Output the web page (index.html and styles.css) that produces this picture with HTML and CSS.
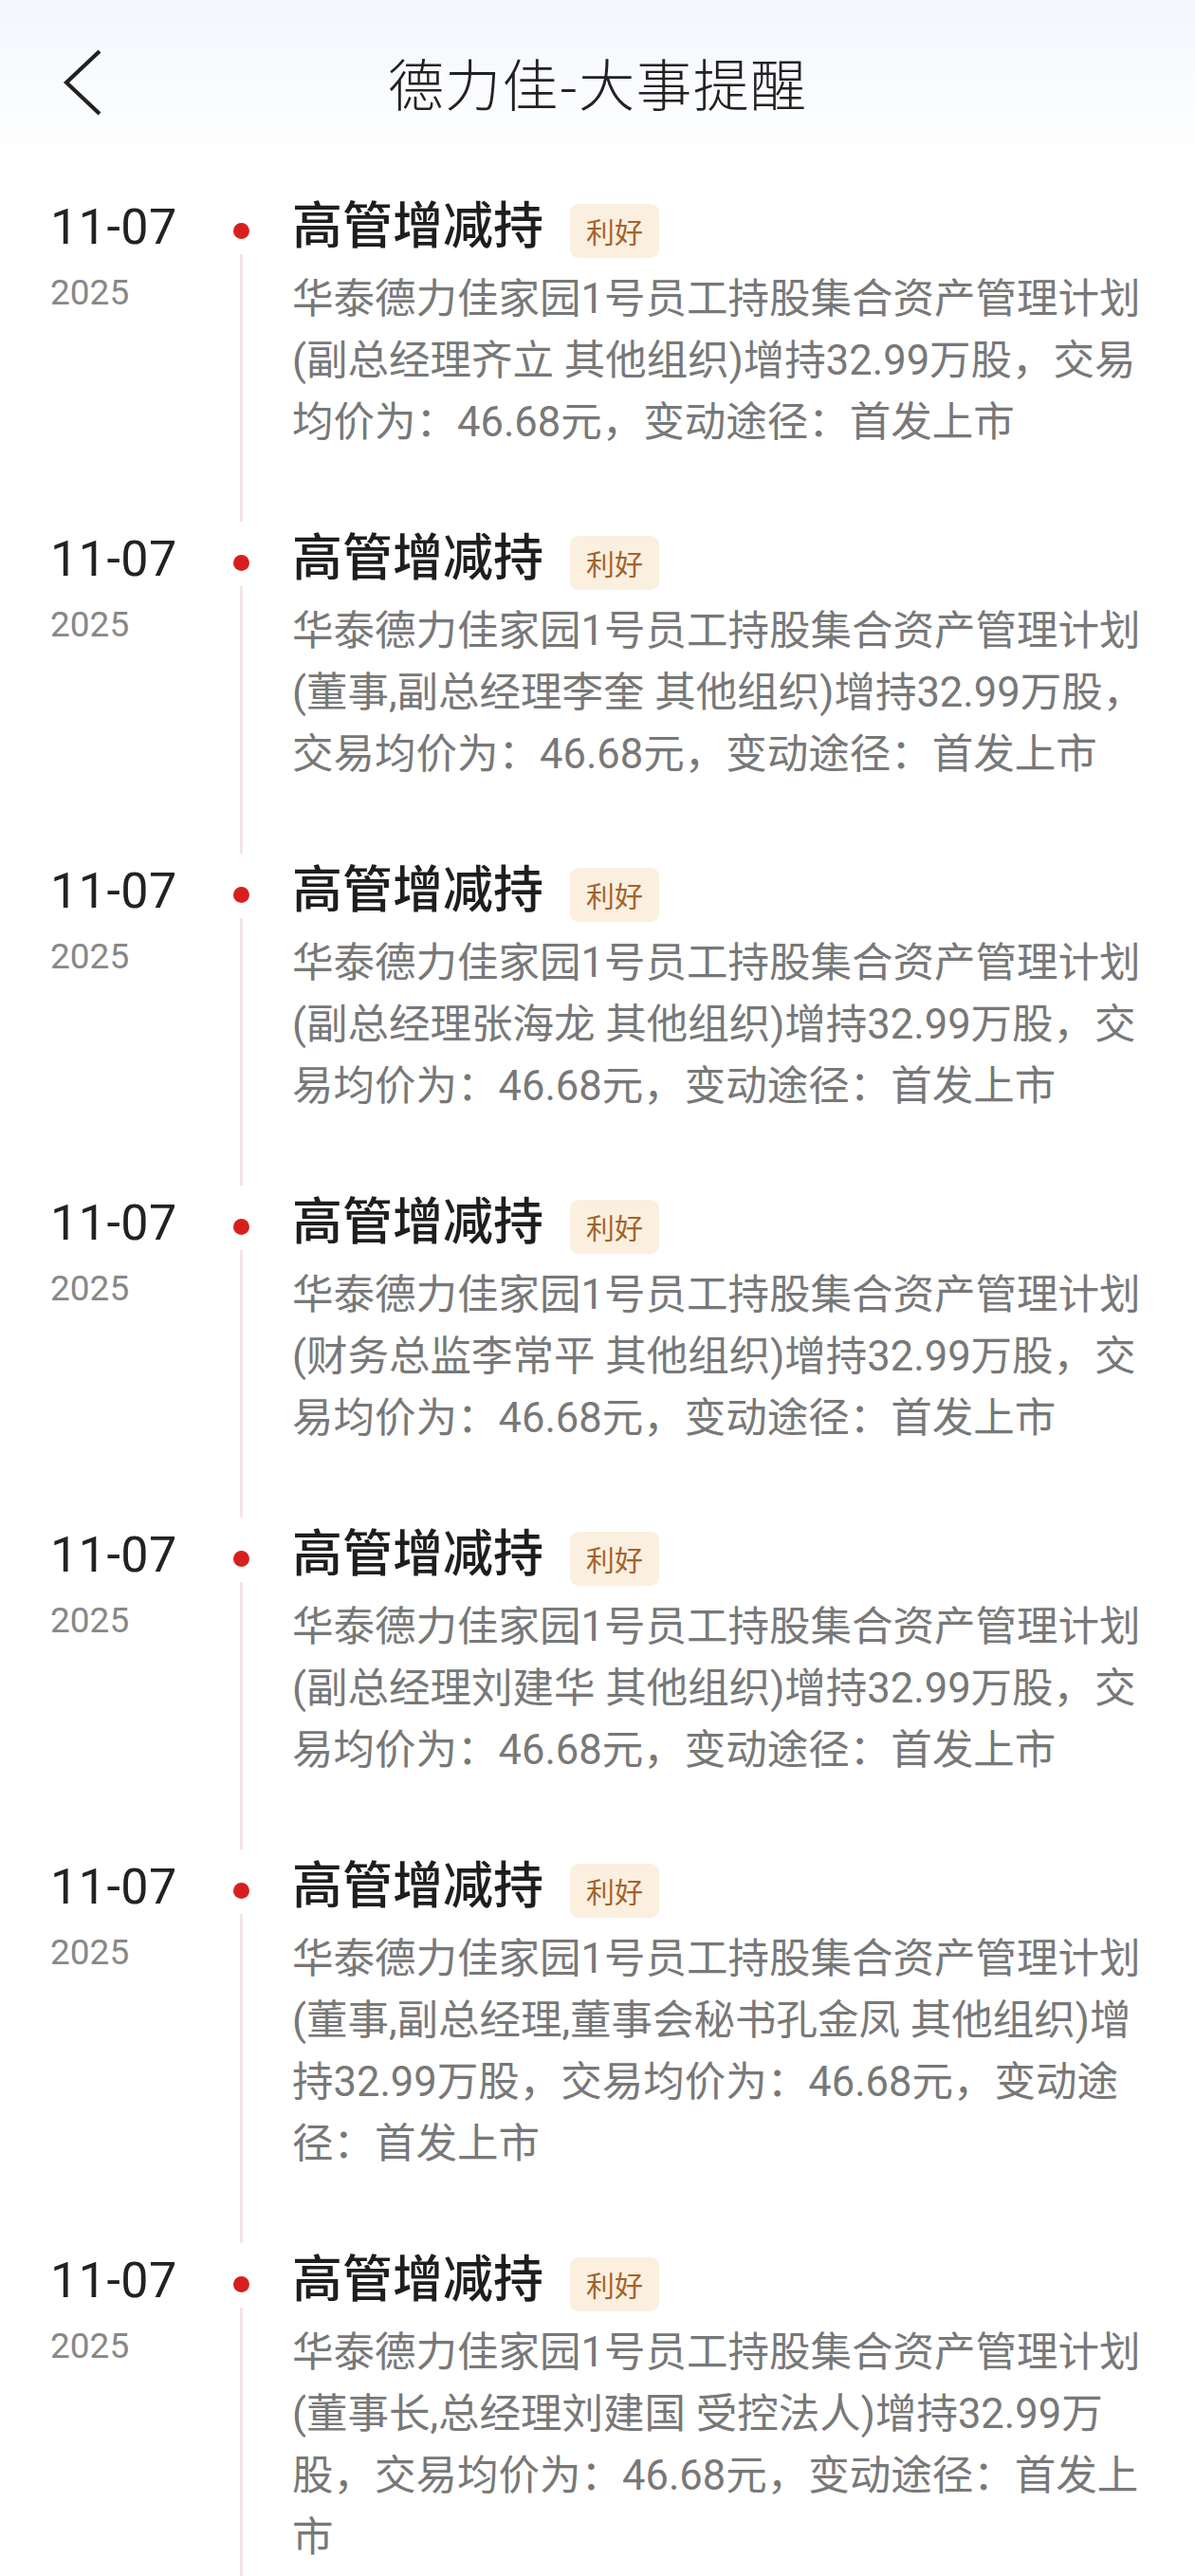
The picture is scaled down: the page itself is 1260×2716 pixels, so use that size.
FILE: index.html
```html
<!DOCTYPE html>
<html lang="zh-CN">
<head>
<meta charset="utf-8">
<title>德力佳-大事提醒</title>
<link rel="stylesheet" href="styles.css">
</head>
<body>
<header class="header">
  <div class="back">
    <svg width="44" height="72" viewBox="0 0 44 72"><path d="M39 3 L4 36 L39 69" fill="none" stroke="#222" stroke-width="4.2" stroke-linejoin="miter"/></svg>
  </div>
  <h1 class="title">德力佳-大事提醒</h1>
  <div class="spacer"></div>
</header>
<main class="list">
  <section class="item">
    <div class="date-col"><div class="date">11-07</div><div class="year">2025</div></div>
    <div class="axis"><span class="dot"></span><span class="line"></span></div>
    <div class="content">
      <div class="head"><span class="event">高管增减持</span><span class="tag">利好</span></div>
      <p class="desc">华泰德力佳家园1号员工持股集合资产管理计划(副总经理齐立 其他组织)增持32.99万股，交易均价为：46.68元，变动途径：首发上市</p>
    </div>
  </section>
  <section class="item">
    <div class="date-col"><div class="date">11-07</div><div class="year">2025</div></div>
    <div class="axis"><span class="dot"></span><span class="line"></span></div>
    <div class="content">
      <div class="head"><span class="event">高管增减持</span><span class="tag">利好</span></div>
      <p class="desc">华泰德力佳家园1号员工持股集合资产管理计划(董事,副总经理李奎 其他组织)增持32.99万股，交易均价为：46.68元，变动途径：首发上市</p>
    </div>
  </section>
  <section class="item">
    <div class="date-col"><div class="date">11-07</div><div class="year">2025</div></div>
    <div class="axis"><span class="dot"></span><span class="line"></span></div>
    <div class="content">
      <div class="head"><span class="event">高管增减持</span><span class="tag">利好</span></div>
      <p class="desc">华泰德力佳家园1号员工持股集合资产管理计划(副总经理张海龙 其他组织)增持32.99万股，交易均价为：46.68元，变动途径：首发上市</p>
    </div>
  </section>
  <section class="item">
    <div class="date-col"><div class="date">11-07</div><div class="year">2025</div></div>
    <div class="axis"><span class="dot"></span><span class="line"></span></div>
    <div class="content">
      <div class="head"><span class="event">高管增减持</span><span class="tag">利好</span></div>
      <p class="desc">华泰德力佳家园1号员工持股集合资产管理计划(财务总监李常平 其他组织)增持32.99万股，交易均价为：46.68元，变动途径：首发上市</p>
    </div>
  </section>
  <section class="item">
    <div class="date-col"><div class="date">11-07</div><div class="year">2025</div></div>
    <div class="axis"><span class="dot"></span><span class="line"></span></div>
    <div class="content">
      <div class="head"><span class="event">高管增减持</span><span class="tag">利好</span></div>
      <p class="desc">华泰德力佳家园1号员工持股集合资产管理计划(副总经理刘建华 其他组织)增持32.99万股，交易均价为：46.68元，变动途径：首发上市</p>
    </div>
  </section>
  <section class="item">
    <div class="date-col"><div class="date">11-07</div><div class="year">2025</div></div>
    <div class="axis"><span class="dot"></span><span class="line"></span></div>
    <div class="content">
      <div class="head"><span class="event">高管增减持</span><span class="tag">利好</span></div>
      <p class="desc">华泰德力佳家园1号员工持股集合资产管理计划(董事,副总经理,董事会秘书孔金凤 其他组织)增持32.99万股，交易均价为：46.68元，变动途径：首发上市</p>
    </div>
  </section>
  <section class="item">
    <div class="date-col"><div class="date">11-07</div><div class="year">2025</div></div>
    <div class="axis"><span class="dot"></span><span class="line"></span></div>
    <div class="content">
      <div class="head"><span class="event">高管增减持</span><span class="tag">利好</span></div>
      <p class="desc">华泰德力佳家园1号员工持股集合资产管理计划(董事长,总经理刘建国 受控法人)增持32.99万股，交易均价为：46.68元，变动途径：首发上市</p>
    </div>
  </section>
</main>
</body>
</html>
```
FILE: styles.css
```css
* { box-sizing: border-box; }
html, body {
  margin: 0;
  padding: 0;
  background: #ffffff;
}
body {
  font-family: Roboto, "Noto Sans CJK SC", sans-serif;
  color: #222;
}

.header {
  height: 174px;
  display: grid;
  grid-template-columns: 1fr auto 1fr;
  align-items: center;
  background: linear-gradient(180deg, #f3f6fc 0%, #f9fbfe 50%, #ffffff 100%);
}
.back {
  padding-left: 66px;
  display: flex;
  align-items: center;
}
.back svg { display: block; }
.title {
  margin: 0;
  font-size: 59px;
  font-weight: 300;
  line-height: 70px;
  color: #222;
  font-family: "Noto Sans CJK SC", sans-serif;
  letter-spacing: 1.2px;
}

.list {
  padding-top: 26px;
}

.item {
  display: flex;
  padding: 3px 48px 0 53px;
}

.date-col {
  width: 172px;
  flex: none;
  padding-top: 6px;
}
.date {
  font-family: Roboto, sans-serif;
  font-size: 52px;
  line-height: 62px;
  color: #222;
  letter-spacing: 0.5px;
}
.year {
  font-family: Roboto, sans-serif;
  font-size: 37px;
  line-height: 50px;
  margin-top: 13px;
  color: #888;
}

.axis {
  width: 58px;
  flex: none;
  display: flex;
  flex-direction: column;
  align-items: center;
  margin-top: -3px;
}
.dot {
  width: 17px;
  height: 17px;
  border-radius: 50%;
  background: #d7201e;
  margin-top: 34.5px;
  flex: none;
}
.line {
  width: 3px;
  flex: 1;
  margin-top: 16.5px;
  background: #f6e4e6;
}

.content {
  flex: 1;
  margin-left: 25px;
  padding-bottom: 72px;
}
.head {
  display: flex;
  align-items: center;
  height: 62px;
}
.event {
  font-family: "Noto Sans CJK SC", sans-serif;
  font-size: 53px;
  font-weight: 500;
  line-height: 62px;
  color: #1e1e1e;
}
.tag {
  margin-left: 28px;
  margin-top: 18px;
  height: 57px;
  padding: 0 17px;
  display: flex;
  align-items: center;
  border-radius: 9px;
  background: #fbefdf;
  color: #a3632b;
  font-family: "Noto Sans CJK SC", sans-serif;
  font-size: 30px;
  line-height: 57px;
}
.desc {
  margin: 18px 0 0;
  font-size: 43.5px;
  line-height: 65px;
  color: #787878;
}
```
